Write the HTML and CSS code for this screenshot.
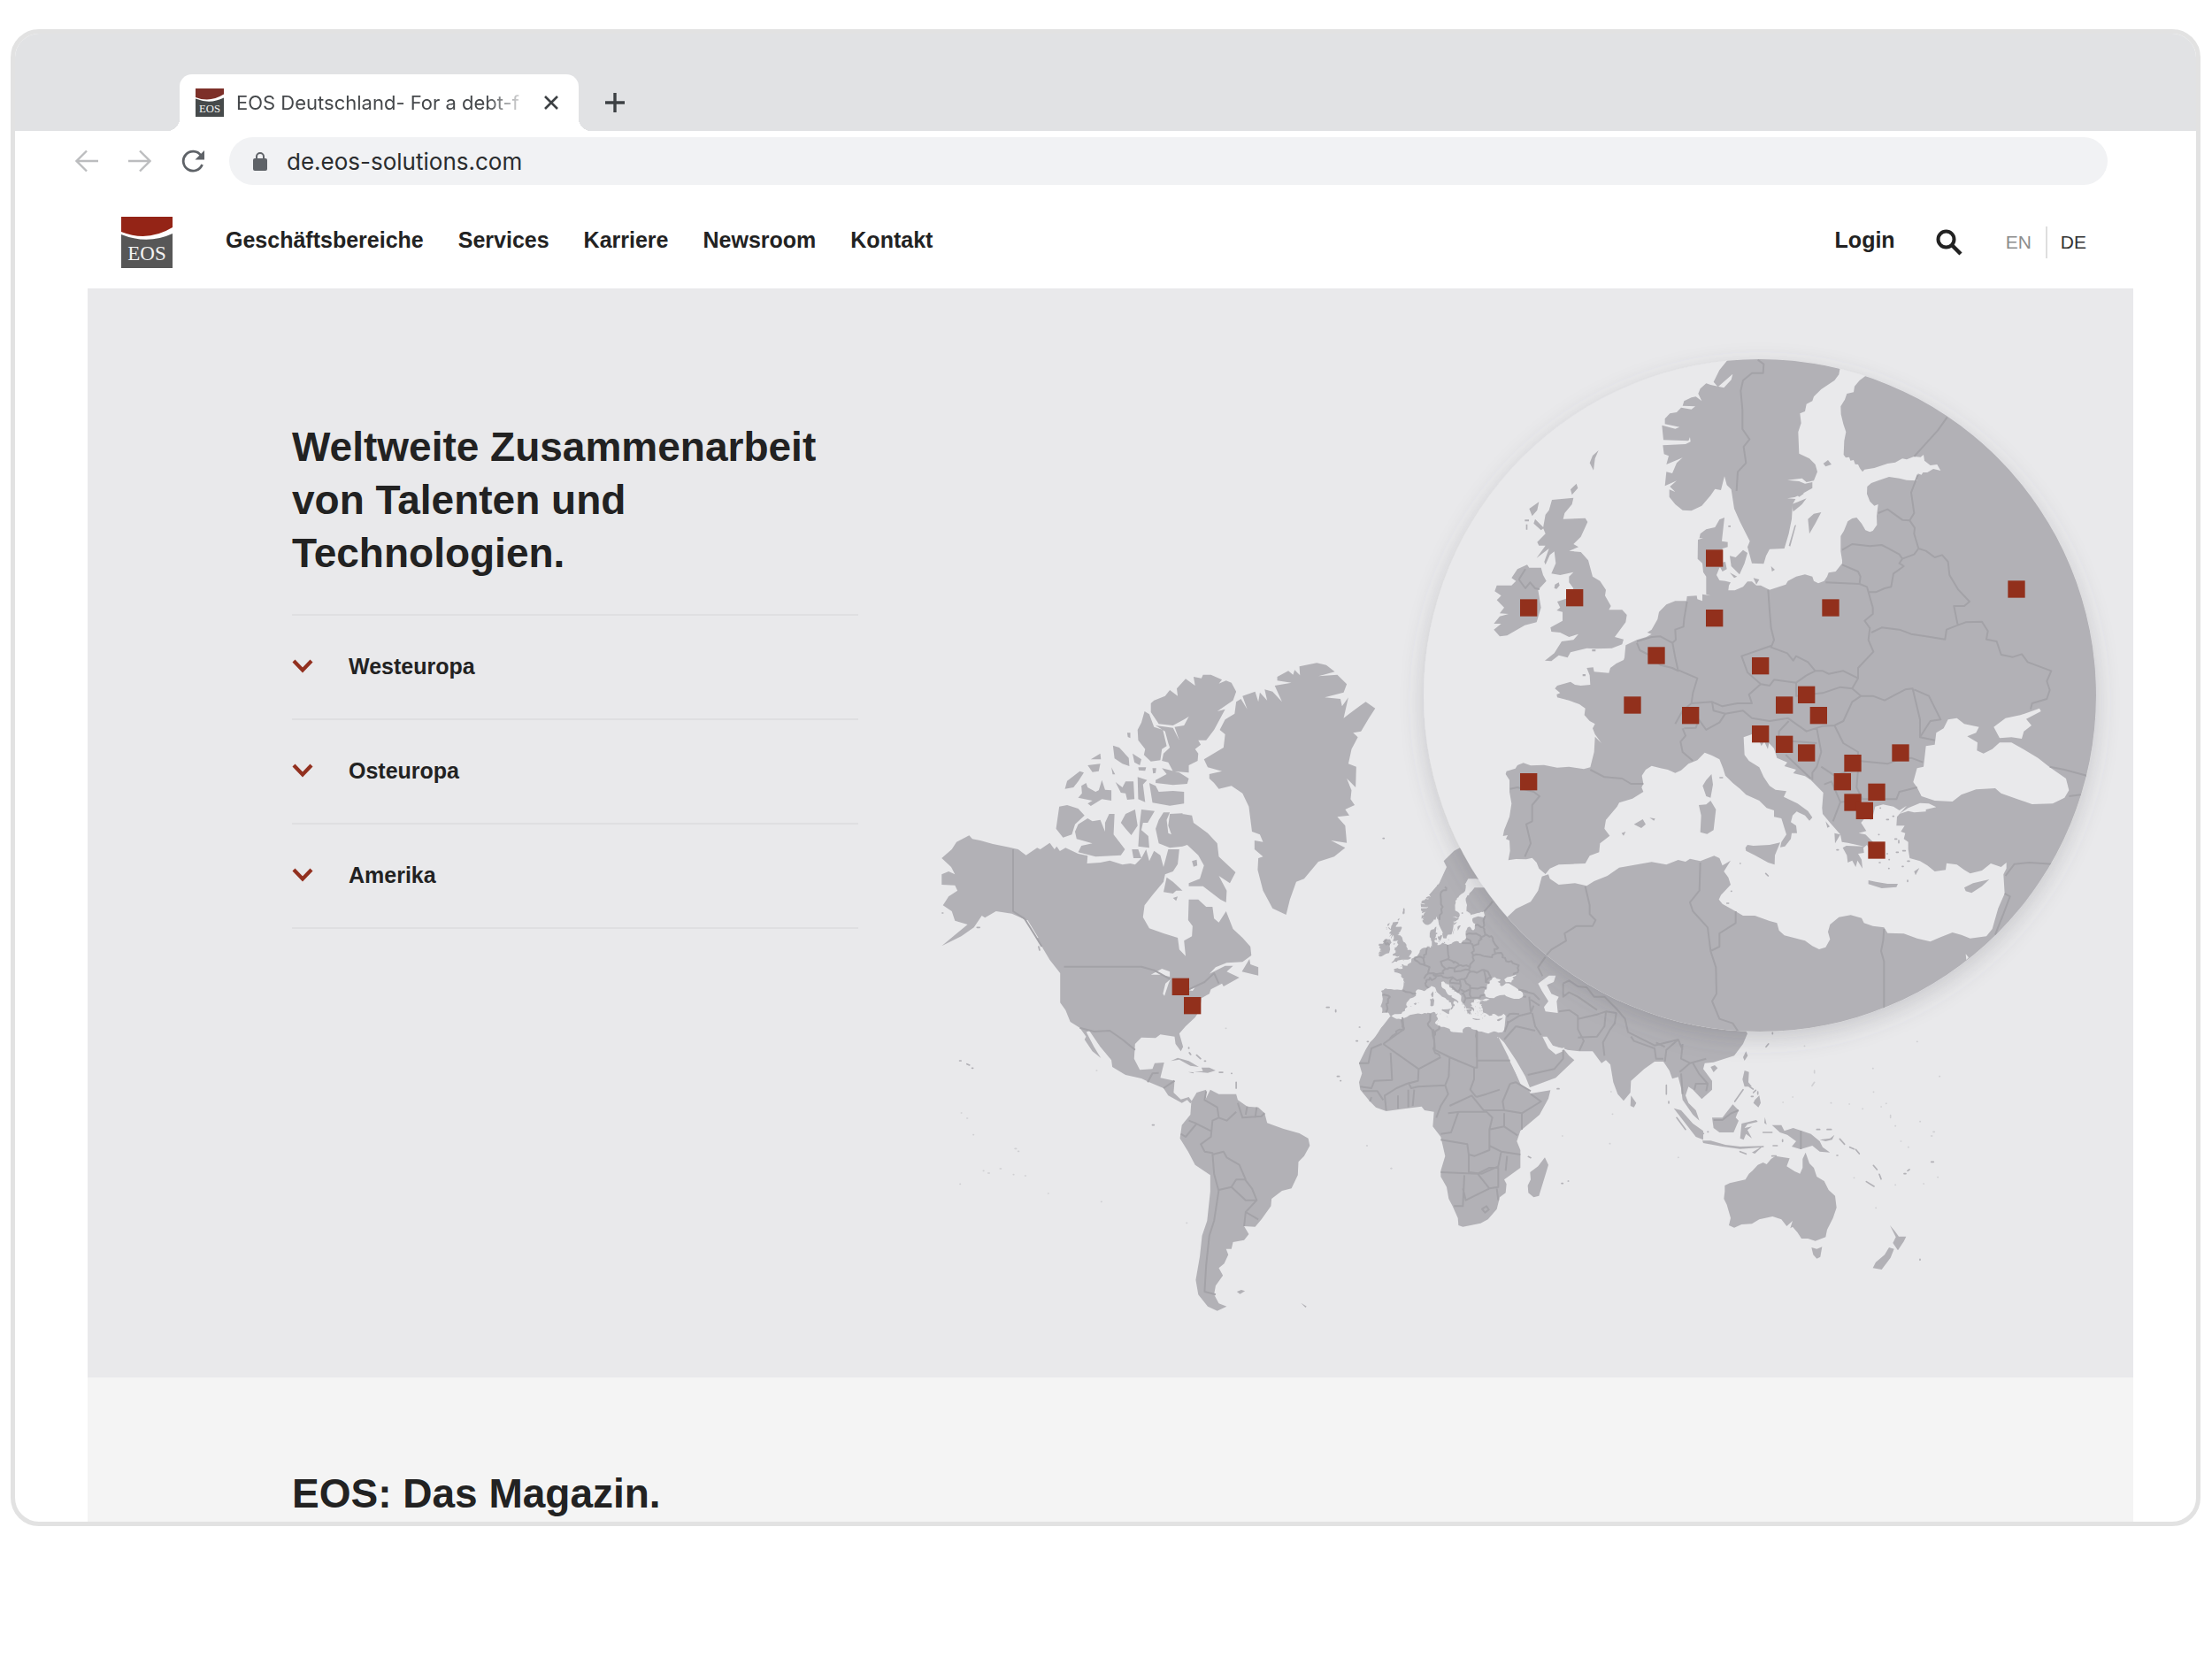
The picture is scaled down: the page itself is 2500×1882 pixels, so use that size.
FILE: index.html
```html
<!DOCTYPE html>
<html lang="de">
<head>
  <meta charset="UTF-8" />
  <meta name="viewport" content="width=device-width, initial-scale=1.0"/>
  <title>EOS Deutschland</title>
  <link rel="stylesheet" href="styles.css">
</head>
<body>
  <div class="browser">
    <div class="tab-bar">
      <div class="tab">
        <svg class="favicon" viewBox="0 0 58 58" aria-hidden="true">
          <path fill="#7d3029" d="M0 0h58v12q-29 18-58 6z"/>
          <path fill="#464a4b" d="M0 21q30 12 58-2v39H0z"/>
          <text class="logo-text" x="29" y="49" text-anchor="middle">EOS</text>
        </svg>
        <span class="tab-title">EOS Deutschland- For a debt-f</span>
        <button class="tab-close" type="button" aria-label="Close tab">
          <svg viewBox="0 0 16 16" width="16" height="16"><path d="M1 1l14 14M15 1L1 15" stroke="#3c4043" stroke-width="2.6"/></svg>
        </button>
      </div>
      <button class="tab-new" type="button" aria-label="New tab">
        <svg viewBox="0 0 22 22" width="22" height="22"><path d="M11 0v22M0 11h22" stroke="#3c4043" stroke-width="3.4"/></svg>
      </button>
    </div>

    <div class="toolbar">
      <button type="button" aria-label="Back">
        <svg viewBox="0 0 26 26" width="26" height="26"><path d="M26 13H2M13 1.5L1.5 13 13 24.5" fill="none" stroke="#bcbdbf" stroke-width="2.4"/></svg>
      </button>
      <button type="button" aria-label="Forward">
        <svg viewBox="0 0 26 26" width="26" height="26"><path d="M0 13h24M13 1.5L24.5 13 13 24.5" fill="none" stroke="#bcbdbf" stroke-width="2.4"/></svg>
      </button>
      <button type="button" aria-label="Reload">
        <svg viewBox="0 0 26 26" width="26" height="26"><path d="M22 6.5A11 11 0 1 0 23.5 17" fill="none" stroke="#5f6368" stroke-width="2.8"/><path d="M26 1v10.5H15.500z" fill="#5f6368"/></svg>
      </button>
      <label class="address">
        <svg viewBox="0 0 16 21" width="16" height="21" aria-hidden="true"><rect y="7" width="16" height="14" rx="2" fill="#5f6368"/><path d="M4 8V5a4 4 0 0 1 8 0v3" fill="none" stroke="#5f6368" stroke-width="2"/></svg>
        <input type="text" value="de.eos-solutions.com" aria-label="Address">
      </label>
    </div>

    <div class="page">
      <header class="site-header">
        <a class="logo" href="#" aria-label="EOS">
          <svg viewBox="0 0 58 58" width="58" height="58">
            <path fill="#942416" d="M0 0h58v12Q30 29 0 17z"/>
            <path fill="#575757" d="M0 20q30 12 58-1v39H0z"/>
            <text class="logo-text" x="29" y="49" text-anchor="middle">EOS</text>
          </svg>
        </a>
        <nav class="main-nav">
          <a href="#">Geschäftsbereiche</a>
          <a href="#">Services</a>
          <a href="#">Karriere</a>
          <a href="#">Newsroom</a>
          <a href="#">Kontakt</a>
        </nav>
        <div class="meta-nav">
          <a class="login" href="#">Login</a>
          <button class="search" type="button" aria-label="Suche">
            <svg viewBox="0 0 30 30" width="30" height="30"><circle cx="11.500" cy="11.500" r="9" fill="none" stroke="#222" stroke-width="4"/><path d="M18 18l10 10" stroke="#222" stroke-width="4.5"/></svg>
          </button>
          <div class="lang">
            <a href="#">EN</a>
            <a class="active" href="#">DE</a>
          </div>
        </div>
      </header>

      <section class="worldwide">
        <div class="regions">
          <h2>Weltweite Zusammenarbeit von Talenten und Technologien.</h2>
          <ul>
            <li><button type="button"><svg viewBox="0 0 24 16" width="24" height="16"><path d="M2 2l10 10.500L22 2" fill="none" stroke="#92301f" stroke-width="4.2"/></svg>Westeuropa</button></li>
            <li><button type="button"><svg viewBox="0 0 24 16" width="24" height="16"><path d="M2 2l10 10.500L22 2" fill="none" stroke="#92301f" stroke-width="4.2"/></svg>Osteuropa</button></li>
            <li><button type="button"><svg viewBox="0 0 24 16" width="24" height="16"><path d="M2 2l10 10.500L22 2" fill="none" stroke="#92301f" stroke-width="4.2"/></svg>Amerika</button></li>
          </ul>
        </div>

        <svg class="map" viewBox="1040 326 1371 1231" role="img" aria-label="Weltkarte">
          <defs>
            <clipPath id="lens"><circle cx="1989" cy="786" r="380"/></clipPath>
            <filter id="lens-shadow" x="-15%" y="-15%" width="130%" height="130%">
              <feDropShadow dx="0" dy="8" stdDeviation="13" flood-color="#55555a" flood-opacity=".22"/>
            </filter>

            <g id="europe">
              <!-- mainland, Turkey and north Africa -->
              <path class="land" d="M1525 105L1505 120 1488 140 1485 160 1462 165 1455 185 1441 208 1442 235 1450 268 1459 295 1453 325 1451 372 1458 382 1470 380 1474 392 1485 390 1490 404 1500 405 1506 418 1515 430 1522 422 1555 417 1600 402 1626 398 1650 385 1665 388 1690 378 1712 380 1722 372 1725 392 1745 408 1768 405 1780 426 1755 420 1735 432 1720 432 1715 440 1703 436 1700 460 1665 458 1640 452 1605 447 1572 458 1545 468 1531 480 1530 505 1540 530 1555 545 1568 540 1563 580 1564 610 1550 630 1540 634 1525 628 1512 605 1495 585 1480 588 1465 598 1452 630 1441 648 1441 700 1446 730 1446 740 1424 768 1400 772 1395 785 1385 800 1365 808 1350 800 1345 785 1320 778 1290 785 1262 800 1255 812 1200 830 1170 815 1155 815 1140 802 1125 802 1110 820 1082 832 1060 832 1062 815 1068 805 1050 800 1030 798 1020 780 1030 755 1040 750 1025 745 1040 715 1040 690 1058 685 1058 668 1038 665 1043 620 1047 585 1030 592 1015 618 985 625 965 640 962 655 975 655 957 660 956 725 972 740 975 770 985 785 985 845 1000 850 972 845 972 868 955 862 953 850 920 852 918 868 880 868 850 880 825 905 820 930 800 965 785 975 800 980 782 990 750 1000 712 1018 708 1060 705 1068 680 1080 660 1095 655 1112 605 1108 602 1093 580 1095 590 1120 592 1152 560 1155 540 1152 525 1142 480 1155 472 1165 490 1180 478 1185 480 1195 520 1205 555 1218 575 1232 572 1255 590 1275 608 1285 600 1300 608 1320 630 1350 608 1328 605 1380 592 1432 570 1438 545 1434 520 1430 480 1433 435 1424 390 1426 365 1417 345 1425 338 1436 308 1445 305 1455 318 1475 318 1515 325 1555 318 1600 300 1645 296 1665 312 1662 306 1675 318 1680 320 1715 314 1747 340 1743 375 1744 395 1739 410 1755 418 1775 440 1794 455 1775 485 1762 530 1760 575 1758 590 1732 622 1720 625 1690 658 1664 640 1640 645 1610 683 1565 690 1552 735 1538 772 1515 766 1500 772 1488 767 1460 780 1440 800 1427 830 1435 855 1440 880 1451 900 1442 925 1420 955 1408 980 1382 1005 1392 1030 1405 1042 1435 1050 1460 1075 1485 1100 1505 1120 1525 1165 1545 1190 1570 1215 1578 1215 1600 1240 1605 1257 1660 1240 1685 1236 1703 1252 1700 1272 1675 1275 1655 1293 1655 1290 1630 1272 1618 1278 1595 1292 1582 1320 1595 1335 1613 1345 1602 1330 1580 1295 1555 1248 1532 1257 1513 1220 1508 1200 1495 1180 1465 1165 1432 1130 1410 1115 1390 1112 1330 1140 1320 1165 1342 1172 1360 1182 1345 1194 1370 1198 1350 1215 1368 1225 1400 1260 1415 1250 1428 1290 1440 1280 1452 1320 1462 1340 1475 1382 1518 1378 1570 1380 1590 1405 1620 1440 1660 1445 1685 1465 1688 1520 1700 1460 1698 1448 1705 1462 1730 1465 1755 1480 1748 1492 1770 1498 1748 1515 1775 1512 1745 1500 1725 1520 1722 1518 1705 1530 1695 1550 1730 1555 1690 1525 1660 1502 1655 1528 1648 1510 1620 1520 1608 1532 1605 1545 1610 1550 1598 1558 1565 1585 1558 1620 1565 1640 1578 1665 1562 1632 1600 1630 1630 1658 1630 1645 1650 1660 1655 1655 1675 1670 1685 1670 1710 1675 1740 1710 1750 1735 1765 1760 1785 1797 1780 1800 1757 1835 1762 1860 1780 1880 1792 1920 1782 1950 1758 1985 1770 2003 1755 2003 1775 1993 1795 1997 1860 1975 1910 1955 1980 1935 2005 1880 2012 1850 2000 1820 1992 1780 2008 1745 2023 1700 2012 1655 1996 1600 1994 1588 1975 1550 1970 1520 1960 1512 1943 1475 1933 1435 1940 1405 1965 1398 1990 1405 2015 1390 2042 1368 2049 1345 2038 1320 2020 1250 2002 1232 1985 1225 1960 1200 1953 1150 1935 1110 1935 1075 1915 1040 1895 1028 1880 1035 1865 1068 1830 1060 1805 1045 1785 1068 1748 1040 1765 1030 1740 1012 1732 965 1750 930 1742 915 1752 890 1746 850 1762 800 1753 690 1772 650 1800 605 1818 580 1834 540 1825 485 1830 455 1810 450 1795 428 1802 415 1850 390 1888 340 1912 310 1940 200 2100 200 2340 2300 2340 2400 1188 2400 60 1560 60Z"/>
              <!-- Scandinavia -->
              <path class="land" d="M1058 50L1030 85 1010 125 1025 142 1075 98 1070 118 1045 145 1000 135 985 130 965 148 958 165 970 190 950 175 935 178 910 190 905 206 948 208 935 218 900 212 885 228 862 232 845 250 845 268 895 278 880 284 835 272 840 322 925 325 930 312 932 328 915 336 838 340 842 370 858 376 850 405 905 382 885 400 870 435 850 430 845 478 885 460 862 480 880 498 860 490 860 515 880 540 905 560 935 562 970 545 1000 510 1015 488 1035 492 1047 445 1055 475 1070 490 1080 555 1100 600 1120 640 1133 665 1125 685 1140 740 1180 742 1188 715 1200 692 1250 690 1265 640 1275 590 1278 540 1288 522 1260 520 1285 516 1310 505 1345 485 1345 465 1320 470 1300 462 1260 458 1310 452 1325 465 1350 460 1362 430 1355 405 1335 385 1300 368 1297 295 1307 265 1303 232 1320 225 1325 200 1345 190 1350 175 1375 150 1420 120 1435 100 1442 60 1442 20 1058 20Z"/>
              <!-- Great Britain, Ireland and the islands around -->
              <path class="land" d="M462 525L535 518 530 540 505 570 500 590 575 587 583 600 560 650 535 675 552 685 520 698 560 702 585 730 600 785 625 800 645 830 642 850 662 885 655 898 700 898 716 915 712 940 690 970 675 990 705 998 700 1015 665 1028 610 1030 580 1028 525 1042 515 1060 485 1052 460 1072 438 1070 470 1045 495 1005 535 1000 552 980 520 990 490 975 460 972 457 958 498 935 498 905 478 900 490 890 480 870 510 860 535 825 520 805 520 785 535 770 490 780 460 775 475 740 470 700 455 712 440 745 436 735 452 690 410 722 440 680 418 680 412 668 440 640 432 620 440 575 452 560ZM378 745L385 755 425 755 432 780 443 800 415 830 425 890 410 940 370 950 310 985 285 988 265 965 290 945 265 945 285 920 315 912 285 910 300 890 275 865 290 850 268 835 275 815 325 815 340 800 325 790 345 760ZM418 532L412 560 395 580 385 555ZM405 590L435 620 425 628 400 605ZM370 592h14v6h-14zM374 608h5v18h-5zM470 825L472 812 485 805 488 815 478 827ZM525 490L545 470 550 485 530 508ZM620 357L608 385 603 425 590 400 600 375ZM598 1032h12v7h-12zM566 1116h10v7h-10z"/>
              <!-- Baltic islands -->
              <path class="land" d="M1065 715L1085 720 1110 695 1125 705 1115 740 1098 778 1070 750ZM1025 740L1050 735 1055 760 1040 768ZM1065 772L1090 785 1080 790ZM1145 790L1165 795 1155 812ZM1060 612h8v5h-8zM1375 567L1355 605 1335 640 1330 590 1350 572ZM1290 610L1270 683 1265 680 1285 612ZM1275 540L1325 520 1310 540 1280 565ZM1280 495L1300 487 1315 498 1315 505 1300 515ZM1382 402L1398 390 1410 405 1390 412ZM1205 750L1218 762 1208 768Z"/>
              <!-- Mediterranean islands -->
              <path class="land" d="M1003 1455L1008 1490 1000 1535 985 1530 973 1495 985 1475ZM960 1560L985 1558 1000 1545 1018 1575 1010 1645 988 1658 965 1652 968 1595ZM740 1625L770 1608 780 1625 765 1638ZM793 1603L812 1606 808 1613ZM698 1655L712 1650 705 1664ZM1118 1705L1125 1695 1145 1698 1200 1695 1236 1687 1218 1730 1217 1762 1195 1755 1150 1730 1120 1715ZM1535 1815L1560 1820 1600 1827 1635 1827 1630 1838 1580 1842 1535 1828ZM1860 1840L1890 1825 1945 1812 1920 1835 1885 1858 1865 1852ZM1690 1785L1708 1773 1695 1798ZM1030 1465h12v4h-12zM1420 1655l20 5-18 30zM1390 1615l14 18-8 4z"/>
              <path class="dots" d="M1575 1570h1M1597 1609h6M1618 1598h3M1638 1680v8M1625 1675h6M1570 1660h1M1630 1720h6M1598 1725h2M1572 1755h3M1605 1745h1M1604 1775h1M1650 1768h3M1668 1750h6M1668 1815v4M1652 1715h8M1428 1712h5M1100 1758h1M1070 1852h1M1187 1792l8 8M1055 1893h6"/>
              <!-- Black Sea, Azov, Marmara -->
              <path class="sea" d="M1805 1270L1835 1265 1860 1285 1910 1295 1900 1315 1870 1327 1905 1348 1903 1375 1925 1385 1955 1370 1980 1348 2020 1348 2060 1370 2110 1400 2150 1432 2205 1470 2215 1510 2200 1535 2160 1555 2090 1557 2040 1540 1985 1520 1965 1503 1900 1507 1850 1525 1820 1548 1760 1545 1715 1530 1700 1500 1687 1482 1700 1435 1722 1430 1730 1360 1760 1355 1765 1315 1790 1300ZM1960 1295L2000 1265 2050 1255 2115 1232 2120 1242 2070 1268 2088 1290 2062 1310 2055 1335 2020 1330 1980 1333ZM1640 1590L1670 1570 1710 1553 1740 1555 1765 1567 1730 1575 1730 1582 1690 1585 1670 1580ZM1865 2065l10 12-8 8z"/>
              <path class="border" d="M1160 50L1180 65 1178 95 1140 95 1110 120 1102 155 1108 220 1108 285 1132 320 1112 345 1120 400 1092 430 1088 495M1802 245L1770 290 1690 378M1703 440L1680 500 1690 570 1675 595 1692 620 1690 640 1705 690 1690 710 1650 725 1640 710 1600 688 1580 678 1540 682 1480 675 1446 695M1568 570L1600 557 1650 593 1675 595M1705 690L1730 698 1760 720 1785 712 1805 735 1810 780 1840 830 1878 870 1860 885 1825 885 1838 950 1865 940 1920 938 1940 970 1935 998 1970 1005 1985 1050 2025 1058 2055 1048 2075 1075 2155 1105 2140 1140 2150 1170 2140 1200 2090 1215 2085 1235M1838 950L1800 965 1795 998 1730 988 1680 980 1640 965 1580 958 1545 975M1650 725L1640 740 1655 750 1620 775 1612 820 1590 825 1560 838 1535 838M1390 805L1505 810 1530 820 1550 890 1550 912 1522 935 1540 960 1535 1000 1552 1040 1500 1095 1500 1130 1480 1165 1510 1190M1446 745L1500 768 1508 785 1505 810M1195 830L1200 900 1205 960 1215 1000 1205 1025 1260 1045 1280 1070 1290 1055 1330 1075 1355 1105 1380 1105 1400 1115 1450 1105 1500 1130M1205 1020L1105 1055 1125 1110 1170 1150 1200 1155 1215 1135 1290 1145 1325 1120 1355 1105M1170 1150L1130 1185 1140 1215 1090 1215 1040 1225 1005 1210 935 1215M880 1285L905 1240 935 1215M1005 1210L1010 1240 1050 1250 1030 1280 985 1305 960 1270 950 1298 910 1300M885 1100L955 1130 940 1180 935 1215M920 870L910 930 908 955 880 965 882 1000 870 1010 830 988 800 990 750 1005M750 1010L760 1035 790 1050 830 1085 870 1095 890 1105 880 1060 870 1005M905 1300L915 1325 898 1345 905 1380 940 1410M592 1440L640 1465 700 1470 730 1488 772 1488M320 1505L345 1500 400 1515 420 1530 395 1560 395 1615 375 1625 390 1690 370 1735M1050 1250L1110 1240 1140 1265 1200 1275 1262 1265 1325 1310 1380 1292 1420 1290 1450 1275 1480 1210 1510 1190M1290 1145L1290 1190 1380 1180 1440 1160 1480 1165M1510 1190L1550 1190 1590 1205 1660 1168 1685 1165 1710 1270 1710 1330 1760 1340M1690 1168L1740 1190 1780 1270 1745 1275 1710 1330M1420 1290L1450 1350 1500 1380 1500 1410 1600 1420 1640 1405 1680 1400 1720 1415M1360 1300L1375 1380 1360 1430 1345 1450 1345 1475M1375 1430L1420 1460 1450 1450 1510 1420M1500 1410L1500 1440 1495 1500 1515 1540 1630 1540 1640 1515 1700 1500M1230 1350L1232 1310 1265 1275M1230 1340L1360 1350M1255 1390L1340 1470M1385 1490L1410 1480 1440 1550 1415 1615M1440 1550L1515 1540M2150 1430L2200 1440 2275 1460M2215 1530L2255 1525M2000 1800L2030 1760 2080 1755 2160 1760M1997 1860L2015 1870 1985 1950M1990 1935L1965 2000M575 1836L590 1900 590 1930 610 1950 600 1970 545 1970 505 1995 510 2020 460 2050 420 2095M965 1755L962 1850 930 1890 940 1920 990 1975 1000 2055 1018 2110 1020 2200 1005 2225 1030 2285 1075 2300 1095 2330M1000 2055L1030 2040 1030 1995 1085 1960 1085 1920M1588 1980L1585 2020 1578 2055 1588 2090 1588 2340M350 795L372 825 388 805 405 825 420 828M372 760L350 795"/>
            </g>
            <rect id="pin" width="58" height="58"/>
          </defs>

          <!-- Americas -->
          <g transform="translate(1040 730) scale(.35714 .33333)">
            <path class="land" d="M155 643L165 655 190 660 230 672 275 682 310 690 335 710 370 685 380 690 410 668 425 690 432 680 442 696 460 685 500 705 530 712 528 738 570 735 600 728 640 742 665 738 680 742 700 720 715 690 725 730 740 695 760 710 770 750 785 690 820 690 815 740 800 765 775 775 770 800 735 845 710 880 705 920 725 958 770 975 815 990 820 1030 840 1052 835 1000 860 985 862 950 848 930 850 860 880 860 905 885 925 885 930 925 945 938 968 900 990 960 1020 990 1045 1020 1048 1050 1020 1072 970 1075 935 1090 915 1112 965 1085 990 1085 970 1105 1010 1125 960 1155 955 1145 920 1165 915 1180 890 1195 885 1235 870 1260 840 1290 820 1315 832 1360 825 1375 808 1350 805 1325 760 1318 745 1330 700 1328 680 1350 677 1400 695 1438 735 1435 742 1415 772 1413 760 1465 805 1475 802 1515 825 1538 850 1530 860 1545 855 1552 845 1540 828 1550 785 1525 770 1500 725 1480 700 1467 650 1455 608 1428 605 1405 570 1360 535 1305 526 1310 550 1360 572 1398 545 1375 520 1335 525 1325 505 1295 475 1275 460 1235 443 1210 443 1110 410 1065 385 1020 365 985 340 935 325 925 290 908 240 900 205 922 195 915 170 955 130 985 68 1018 110 980 150 945 110 932 100 900 72 880 90 850 118 830 110 812 68 810 68 775 90 765 110 775 98 750 68 720 100 690 115 665Z"/>
            <!-- Greenland -->
            <path class="land" d="M1000 190L1015 180 1035 215 1020 170 1060 155 1070 190 1075 158 1098 185 1090 148 1115 155 1145 190 1122 135 1175 125 1130 118 1130 105 1165 85 1180 98 1185 82 1202 100 1200 70 1255 58 1285 65 1312 88 1260 103 1320 98 1350 130 1340 158 1280 175 1330 180 1335 205 1355 175 1340 245 1390 205 1410 190 1440 212 1420 245 1395 290 1370 295 1385 310 1365 350 1355 400 1380 410 1378 480 1350 450 1365 490 1362 520 1375 540 1345 555 1358 575 1320 580 1345 610 1350 668 1300 660 1345 685 1310 715 1260 732 1215 790 1190 800 1170 860 1158 912 1115 890 1085 830 1068 760 1070 720 1085 715 1058 690 1058 660 1085 665 1075 640 1050 630 1040 545 1020 500 985 475 945 485 930 465 915 450 915 435 955 425 910 412 898 385 960 345 965 300 948 285 965 250 995 230Z"/>
            <!-- Canadian arctic -->
            <path class="land" d="M730 195L740 185 775 170 790 150 815 170 812 145 840 112 870 135 865 105 890 110 895 98 920 98 955 115 945 128 968 118 985 125 1000 155 990 185 940 222 965 215 930 285 905 320 880 320 888 335 870 350 880 365 878 390 850 405 850 430 800 425 785 395 765 390 770 365 790 345 785 330 775 290 745 270 800 278 820 320 805 275 835 270 850 240 835 250 800 270 755 265 730 225ZM710 222L725 232 740 275 768 285 780 340 765 350 760 388 730 392 708 370 712 350 690 320 688 285 700 260ZM745 455L780 435 765 415 820 430 850 450 845 468 800 472 745 465ZM725 465L745 475 755 495 800 492 835 495 835 535 790 542 735 532ZM610 338L630 345 660 380 662 408 640 400 615 382ZM672 365L700 385 695 405 678 395ZM540 385L570 365 572 385ZM530 405L570 400 565 425 545 428ZM505 425L518 430 500 460 485 480 458 485 465 458ZM510 475L525 465 530 480 555 495 565 490 575 455 585 488 605 490 605 525 575 520 540 543 530 535 545 525 500 515 512 500ZM618 462L640 480 650 460 675 460 678 520 655 522 650 500 635 498ZM688 445L718 455 705 470 712 530 690 520ZM690 412L715 412 712 424 692 422ZM735 415h12l-2 16-8 2zM605 412l12 24-8 0zM655 295h10v18l-8-4zM440 545L465 540 500 552 520 575 490 605 480 640 452 650 430 620ZM500 605L530 585 545 595 570 590 585 630 585 600 598 570 615 570 612 640 648 690 635 710 555 715 500 700 510 678 545 670 495 655 490 630ZM635 600L650 570 680 555 688 610 668 642 650 620ZM700 555L742 560 720 600 705 600 700 625 722 645 725 685 690 680 695 600ZM755 590L770 565 790 565 780 590 785 635 795 640 785 610 790 570 830 568 838 600 830 570 860 575 865 600 910 635 940 670 945 715 998 768 980 805 945 780 970 830 968 870 950 860 895 815 850 815 850 805 885 790 898 745 880 710 845 675 830 680 790 685 755 670 745 620ZM780 785L800 800 830 830 810 830 800 840 770 835ZM800 855L815 850 810 865ZM860 730l15-5 2 20-12 4zM670 690l20 0 10 30-25 0z"/>
            <!-- Newfoundland, Caribbean, Falklands -->
            <path class="land" d="M1042 1062L1045 1080 1070 1090 1070 1118 1018 1105ZM793 1408L815 1397 850 1408 882 1428 855 1424 820 1403ZM890 1430L915 1430 935 1440 910 1448 868 1444 895 1442ZM848 1445l18 1-2 4zM945 1444h14v5h-14zM1002 2190l14-6 12 4-16 10zM1205 2228l18 12-4 4z"/>
            <!-- South America -->
            <path class="land" d="M858 1545L875 1515 905 1505 902 1540 918 1505 945 1520 1000 1520 1005 1540 1035 1562 1070 1565 1090 1585 1098 1618 1150 1638 1200 1653 1228 1670 1233 1695 1215 1730 1197 1750 1195 1795 1175 1840 1145 1848 1112 1875 1110 1900 1080 1945 1060 1970 1025 1968 1040 1995 1025 2015 990 2022 985 2045 968 2045 975 2065 962 2095 945 2110 958 2135 935 2170 930 2200 945 2230 970 2240 940 2255 910 2240 880 2200 872 2150 885 2070 892 2000 908 1950 918 1850 918 1795 870 1760 848 1715 822 1670 828 1625 855 1590Z"/>
            <path class="sea" d="M730 1115L765 1095 790 1105 790 1122 760 1115ZM792 1130L776 1145 768 1180 773 1187 786 1145ZM850 1168L870 1158 862 1170ZM330 930l10 0 34 60-8 2z"/>
            <path class="dots" d="M125 1407h4M148 1418l8 4M164 1432h3M735 1625h5M70 906h2M180 955h8M375 1020l3 12M850 1362v3M852 1380l4 6M875 1388l12 12M900 1408h3M1000 1480v20M985 1450h1M1286 1226h8M1315 1235v6M1465 653h3M1390 1293h1M1380 1340h4M1415 1342h3M1320 1460h6M1330 1475h1"/>
            <path class="atolls" d="M300 1705h4M310 1714h2M215 1788h4M200 1780h1M253 1773h3M295 1793h1M332 1797h2M126 1825h1M130 1584h1M148 1602h2M168 1658h1M405 1857h1M573 1885h1M843 1957h1M967 1297h1M1413 1695h1M1490 1772h1M558 1440h1"/>
            <path class="border" d="M294 690V900L330 925 365 985 385 1020M455 1088H700L740 1100 790 1130M850 1165L900 1140 930 1110 945 1145M505 1295L550 1308 600 1305 640 1335 680 1370M720 1480L735 1450 755 1448M770 1500L805 1475M905 1510L900 1540 940 1565 945 1600 925 1610 920 1665 888 1690 900 1715 925 1720 930 1790 945 1850M850 1610L870 1618 920 1645M875 1620L840 1665 825 1655M945 1600L970 1610 1000 1580M1005 1550L1020 1600 1080 1595 1090 1585M1035 1562L1030 1590M1065 1565L1060 1600M925 1725L960 1715 970 1735 1010 1760 1030 1810 1000 1810 985 1835 945 1845 930 1950 915 2000 905 2100 900 2190 935 2200M985 1835L1030 1880 1065 1880 1050 1840 1028 1810M1065 1880L1030 1920 1025 1968M1030 1920L1070 1945"/>
          </g>

          <!-- Africa, Asia and Oceania -->
          <g transform="translate(1500 930) scale(.33333)">
            <path class="land" d="M215 655L180 700 170 720 145 745 130 770 108 815 118 850 108 880 112 905 145 945 165 965 200 978 260 970 320 962 330 975 362 980 358 1030 385 1065 400 1130 385 1180 385 1200 405 1235 412 1275 425 1300 443 1340 445 1365 460 1370 520 1358 545 1345 575 1310 585 1270 605 1255 608 1225 600 1210 655 1170 655 1110 643 1080 655 1045 720 990 750 935 757 907 690 918 680 905 660 890 620 810 600 750 580 725 560 720 300 700Z"/>
            <path class="land" d="M605 655L600 710 590 740 610 760 640 830 680 900 775 865 838 805 820 790 800 765 775 785 745 755 800 765 815 770 855 775 900 775 930 815 945 805 960 820 970 880 985 920 1005 943 1028 915 1030 875 1075 835 1110 810 1140 810 1160 840 1170 868 1190 862 1200 900 1205 940 1240 990 1262 1010 1250 975 1225 950 1215 925 1225 895 1240 905 1270 937 1305 905 1305 875 1275 835 1280 815 1310 812 1380 790 1410 750 1425 715 1300 500 700 200 545 200 530 300 545 350 560 600Z"/>
            <path class="land" d="M450 85L430 95 395 130 405 150 380 205 345 245 400 260 450 240 478 190 505 190 545 200Z"/>
            <!-- Australia, New Zealand -->
            <path class="land" d="M1348 1230L1365 1222 1418 1210 1430 1190 1442 1180 1460 1160 1478 1152 1490 1158 1505 1140 1520 1130 1568 1138 1558 1165 1585 1182 1603 1190 1612 1170 1612 1140 1622 1118 1635 1155 1650 1170 1660 1200 1685 1215 1700 1245 1722 1265 1727 1305 1715 1340 1695 1380 1690 1405 1655 1418 1630 1410 1608 1410 1595 1390 1578 1370 1570 1375 1578 1350 1558 1368 1540 1345 1510 1335 1465 1345 1440 1360 1405 1362 1380 1373 1362 1365 1368 1340 1355 1295 1345 1275 1348 1250ZM1642 1440L1660 1445 1678 1438 1672 1472 1660 1478 1648 1465ZM1908 1365L1925 1385 1938 1403 1963 1403 1955 1420 1935 1450 1918 1425 1928 1405ZM1905 1440L1922 1445 1910 1475 1880 1515 1850 1510 1860 1490 1890 1465Z"/>
            <!-- Madagascar and the south east Asian islands -->
            <path class="land" d="M1030 925L1048 950 1040 965 1028 960ZM738 1135L750 1160 735 1210 718 1265 700 1270 682 1255 680 1230 690 1210 688 1185 715 1165ZM1175 968L1200 975 1240 1020 1275 1045 1275 1075 1250 1065 1215 1020ZM1272 1078L1300 1078 1350 1092 1400 1098 1480 1096 1480 1100 1400 1106 1340 1098 1275 1086ZM1305 1000L1340 1000 1375 955 1395 975 1385 1000 1395 1010 1378 1050 1330 1050 1310 1035ZM1405 1020L1455 1008 1460 1014 1425 1022 1415 1035 1440 1030 1425 1042 1440 1070 1420 1055 1412 1075 1400 1070ZM1415 840L1430 845 1428 880 1440 895 1415 895 1408 870ZM1450 940L1465 925 1470 950 1462 965 1445 950ZM1420 775L1426 790 1415 807 1410 795ZM1300 828l14-6 10 10-14 14zM1508 1025L1540 1025 1550 1045 1580 1035 1640 1055 1670 1080 1680 1100 1705 1118 1670 1115 1645 1095 1605 1107 1575 1098 1590 1080 1560 1058 1535 1050ZM1670 1075L1705 1070 1720 1058 1712 1075 1690 1080ZM1440 1118l40-24-30 28zM1484 998l6 26-8-6z"/>
            <path class="dots" d="M1410 905L1382 945M1432 895l12 8M1445 915l8-8M1460 912v8M1438 928h6M1738 1072l16 18M1772 1100l14 6M1792 1108l12 14M1828 1217l26 16M1852 1162l12 14M1872 1192l6 16M1956 1190h6M1968 1180l6-4M2048 1150h8M2010 1480v3M1185 1000l30 40M1150 890v30M1158 945v6M1478 1050h30M1512 1095h14M1544 1075v6M1496 750l-8 10M1510 712v4M780 902h6M795 1223h4M817 1215h1M682 1132l8 4M260 292v14M1660 1040h10M1695 1040h14M1728 1128h3M1400 1115l20 8M1270 1050l6 4M1290 1048h2M1508 1130h14"/>
            <path class="atolls" d="M1652 840v8M1652 880l-8 12M1618 757h1M2000 742h1M1850 833h1M1578 930h1M1545 948h1M1708 950h1M1770 954h1M1815 970h1M1852 913h1M1878 963h1M1895 952h1M1910 992v8M1926 1028h1M2010 1013h1M2055 1048h4M2048 1062h3M1945 1080h1M1970 1100h1M2022 1224h1M2070 1202h1M1786 1204h1M1860 1306h1M1926 1228h1M2076 860h1M135 1095h1M217 1172h1M958 1088h1M1190 1135h1M967 988h1M962 912h1M797 1062h1"/>
          </g>
          <use href="#europe" transform="translate(1535.5 998.3) scale(.084)"/>
          <g transform="translate(1500 930) scale(.33333)">
            <path class="sea" d="M752 518L775 518 768 540 745 550 760 580 785 590 778 605 782 645 740 640 735 625 750 605 728 570 715 545ZM580 725L600 745 640 805 672 860 690 905 682 908 655 885 625 815ZM730 725L745 725 765 755 795 765 805 762 800 775 775 785 750 765Z"/>
            <path class="border" d="M190 750L310 835 385 795M360 700L365 770 415 795 498 830M190 750L260 700 255 660M185 750L150 765 140 815 108 815M215 780L220 872 160 875 150 900 112 895M310 835L308 875 270 885 235 900 195 925 200 975M415 795L412 860 400 890 410 920 385 960 370 1000M498 830L498 870 485 905 505 930M508 705V806H620M508 806L508 830 498 830M275 880L285 900 308 895 400 890M620 885L640 880 690 910M620 885L595 945 600 975 660 985 725 945 690 920M505 930L540 920 585 905M415 960L490 925 530 975 600 975M410 985L450 980 540 980 560 1000 550 1040 550 1110 500 1130 480 1125 475 1090 385 1075M445 980L420 1050 385 1055M600 985L600 1030 645 1060M550 1040L600 1030M660 985V1040M550 1095L590 1115 655 1125M480 1125L480 1185 525 1190 580 1165 590 1115M385 1185L510 1190 550 1170 580 1170 580 1235 550 1240 510 1190M465 1195L460 1300 430 1300M460 1240L470 1280 550 1240M575 1240L580 1280M610 1130L605 1180M240 925L240 970M275 905L275 965M295 905L290 960M120 910L170 910 190 940M150 930L145 945M525 1310L540 1300 548 1312 535 1322ZM610 680L650 655 690 645 700 620M695 645L705 690 725 720M640 690L705 705M640 690L600 735M680 855L770 835 800 800 800 770M785 640L820 635 850 655 850 700 870 740 855 772M850 665L915 650 945 640 940 690 915 725 850 728M800 545L800 590 820 575 850 590 915 635M800 545L820 535 850 555 880 558 905 590 940 590 980 630M945 640L980 645 975 680 960 700 935 745 940 790M980 630L1010 665 1020 710 1110 755 1190 735 1205 770M1030 725L1040 740 1110 765 1115 800 1140 800M1115 745L1145 760M1145 810L1150 770 1190 735M1205 750L1200 800 1230 815 1285 800M1195 845L1230 815M1200 850L1205 920M1240 815L1260 850 1290 885 1285 910M1245 905L1250 885 1290 885M740 455L715 490 730 520M660 570L700 580 720 600M685 590L690 640M690 600L720 620M1310 1008L1340 1008 1370 985 1395 975M1606 1045V1107"/>
          </g>

          <!-- Europe lens -->
          <circle class="sea" cx="1989" cy="786" r="380" filter="url(#lens-shadow)"/>
          <g clip-path="url(#lens)">
            <use href="#europe" transform="translate(1600 390) scale(.33333)"/>
          </g>

          <g class="pins" transform="translate(1600 390) scale(.33333)">
            <use href="#pin" x="354" y="862"/>
            <use href="#pin" x="510" y="828"/>
            <use href="#pin" x="984" y="694"/>
            <use href="#pin" x="984" y="897"/>
            <use href="#pin" x="787" y="1024"/>
            <use href="#pin" x="1140" y="1059"/>
            <use href="#pin" x="1378" y="862"/>
            <use href="#pin" x="2008" y="799"/>
            <use href="#pin" x="706" y="1192"/>
            <use href="#pin" x="903" y="1227"/>
            <use href="#pin" x="1140" y="1290"/>
            <use href="#pin" x="354" y="1452"/>
            <use href="#pin" x="1221" y="1192"/>
            <use href="#pin" x="1296" y="1157"/>
            <use href="#pin" x="1337" y="1227"/>
            <use href="#pin" x="1221" y="1325"/>
            <use href="#pin" x="1296" y="1354"/>
            <use href="#pin" x="1453" y="1389"/>
            <use href="#pin" x="1418" y="1452"/>
            <use href="#pin" x="1534" y="1487"/>
            <use href="#pin" x="1453" y="1522"/>
            <use href="#pin" x="1493" y="1550"/>
            <use href="#pin" x="1615" y="1354"/>
            <use href="#pin" x="1534" y="1684"/>
            <use href="#pin" x="-826" y="2147"/>
            <use href="#pin" x="-786" y="2211"/>
          </g>
        </svg>
      </section>

      <section class="magazine">
        <h2>EOS: Das Magazin.</h2>
      </section>
    </div>
  </div>
</body>
</html>
```
FILE: styles.css
```css
* {
  box-sizing: border-box;
}

body {
  margin: 0;
  padding: 33px 13px 0 12px;
  background: #fff;
  color: #222;
  font-family: "Liberation Sans", Arial, sans-serif;
}

a {
  color: inherit;
  text-decoration: none;
}

button {
  padding: 0;
  border: none;
  background: none;
  color: inherit;
  font: inherit;
  cursor: pointer;
}

svg {
  display: block;
}

h2 {
  margin: 0;
  font-size: 46px;
  line-height: 60px;
}

.browser {
  overflow: hidden;
  border: 5px solid #e2e2e2;
  border-radius: 32px;
  background: #fff;
}

/* browser chrome */

.tab-bar {
  display: flex;
  align-items: flex-end;
  height: 110px;
  padding-left: 186px;
  background: #e1e2e4;
}

.tab {
  position: relative;
  display: flex;
  align-items: center;
  width: 451px;
  height: 64px;
  padding: 0 23px 0 18px;
  border-radius: 14px 14px 0 0;
  background: #fff;
}

.tab::before,
.tab::after {
  content: "";
  position: absolute;
  bottom: 0;
  width: 14px;
  height: 14px;
}

.tab::before {
  right: 100%;
  background: radial-gradient(circle at 0 0, transparent 14px, #fff 14px);
}

.tab::after {
  left: 100%;
  background: radial-gradient(circle at 100% 0, transparent 14px, #fff 14px);
}

.favicon {
  flex: none;
  width: 32px;
  height: 32px;
}

.logo-text {
  fill: #f2f2f2;
  font-family: "Liberation Serif", serif;
  font-size: 23px;
  font-weight: normal;
}

.tab-title {
  flex: 1;
  overflow: hidden;
  margin: 0 16px 0 14px;
  color: #45484b;
  font-family: Inter, sans-serif;
  font-size: 22px;
  white-space: nowrap;
  -webkit-mask-image: linear-gradient(to right, #000 85%, transparent);
  mask-image: linear-gradient(to right, #000 85%, transparent);
}

.tab-new {
  height: 64px;
  margin-left: 30px;
}

.toolbar {
  display: flex;
  align-items: center;
  padding: 7px 100px 13px 51px;
}

.toolbar button {
  display: flex;
  justify-content: center;
  width: 60px;
}

.address {
  display: flex;
  flex: 1;
  align-items: center;
  gap: 22px;
  height: 54px;
  margin-left: 11px;
  padding: 0 27px;
  border-radius: 27px;
  background: #f1f2f4;
}

.address input {
  flex: 1;
  padding: 0;
  border: none;
  outline: none;
  background: none;
  color: #2a2c2e;
  font-family: Inter, sans-serif;
  font-size: 26px;
}

/* site */

.page {
  margin: 0 71px 0 82px;
}

.site-header {
  display: flex;
  align-items: center;
  height: 104px;
  padding: 0 53px 0 38px;
  font-size: 25px;
  font-weight: bold;
}

.main-nav {
  display: flex;
  gap: 39px;
  margin-left: 60px;
  padding-bottom: 6px;
}

.meta-nav {
  display: flex;
  align-items: center;
  margin-left: auto;
}

.login {
  padding-bottom: 6px;
}

.search {
  margin: 0 49px 0 46px;
}

.lang {
  display: flex;
  color: #8c8c8c;
  font-size: 21px;
  font-weight: normal;
  line-height: 36px;
}

.lang .active {
  margin-left: 16px;
  padding-left: 15px;
  border-left: 2px solid #dedede;
  color: #333;
}

.worldwide {
  display: flex;
  gap: 70px;
  padding-left: 231px;
  background: #e9e9eb;
}

.regions {
  flex: none;
  width: 640px;
  padding-top: 149px;
}

.regions ul {
  margin: 39px 0 0;
  padding: 0;
  border-bottom: 2px solid #dfdfe1;
  list-style: none;
}

.regions li {
  border-top: 2px solid #dfdfe1;
}

.regions button {
  display: flex;
  align-items: center;
  gap: 40px;
  width: 100%;
  height: 116px;
  padding-bottom: 2px;
  font-size: 25px;
  font-weight: bold;
  text-align: left;
}

.map {
  flex: 1;
  min-width: 0;
}

.land {
  fill: #b2b1b6;
}

.sea {
  fill: #e9e9eb;
}

.border {
  fill: none;
  stroke: #a3a2a7;
  stroke-width: 2px;
  stroke-linejoin: round;
  vector-effect: non-scaling-stroke;
}

.dots,
.atolls {
  fill: none;
  stroke: #b2b1b6;
  stroke-width: 5;
  stroke-linecap: round;
}

.atolls {
  stroke: #d0d0d3;
}

.pins {
  fill: #92301c;
}

.magazine {
  padding: 101px 231px 2px;
  background: #f4f4f4;
}
```
